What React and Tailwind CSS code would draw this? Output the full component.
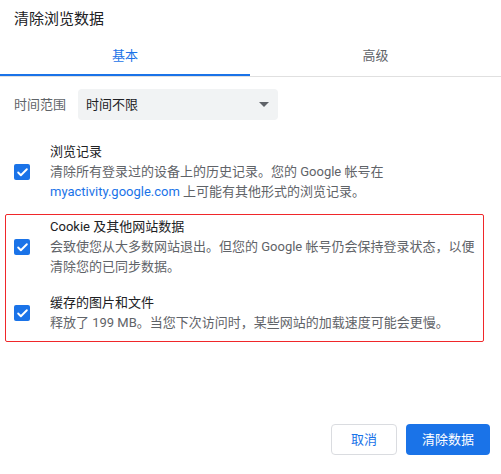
import { Check } from 'lucide-react';

const font = { fontFamily: 'Roboto, "Noto Sans CJK SC", sans-serif' };

const Checkbox = () => (
  <div className="w-4 h-4 shrink-0 rounded-[2px] bg-[#1a73e8] flex items-center justify-center">
    <Check className="w-[13px] h-[13px] text-white" strokeWidth={3.5} />
  </div>
);

const Item = ({ title, children }) => (
  <div className="flex items-center">
    <Checkbox />
    <div className="ml-5 w-[436px] text-[13px] leading-5">
      <div className="text-[#202124]">{title}</div>
      <div className="text-[#5f6368]">{children}</div>
    </div>
  </div>
);

export default function App() {
  return (
    <div className="w-[501px] h-[474px] bg-white" style={font}>
      {/* Header */}
      <div className="pt-[9px] px-[14px] text-[15px] leading-5 text-[#202124]">清除浏览数据</div>

      {/* Tabs */}
      <div className="mt-[7px] flex border-b border-[#e0e0e0]">
        <div className="relative w-[250px] h-10 flex items-center justify-center text-[13px] text-[#1a73e8]">
          基本
          <div className="absolute left-0 right-0 bottom-0 h-[2px] bg-[#1a73e8]" />
        </div>
        <div className="flex-1 h-10 flex items-center justify-center text-[13px] text-[#5f6368]">高级</div>
      </div>

      {/* Time range */}
      <div className="mt-3 px-[14px] flex items-center">
        <span className="text-[13px] text-[#5f6368] w-16">时间范围</span>
        <div className="w-[200px] h-[31px] rounded-[4px] bg-[#f1f3f4] flex items-center justify-between pl-2 pr-[9px]">
          <span className="text-[13px] text-[#202124]">时间不限</span>
          <svg width="10" height="5" viewBox="0 0 10 5">
            <path d="M0 0 L10 0 L5 5 Z" fill="#5f6368" />
          </svg>
        </div>
      </div>

      {/* Items */}
      <div className="mt-[22px] px-[14px]">
        <Item title="浏览记录">
          清除所有登录过的设备上的历史记录。您的 Google 帐号在
          <br />
          <span className="text-[#1a73e8]">myactivity.google.com</span> 上可能有其他形式的浏览记录。
        </Item>
      </div>

      <div className="mt-3 ml-[5px] w-[479px] rounded-[2px] border border-[#f0272a] pl-2 pt-[2px] pb-2">
        <Item title="Cookie 及其他网站数据">
          会致使您从大多数网站退出。但您的 Google 帐号仍会保持登录状态，以便
          <br />
          清除您的已同步数据。
        </Item>
        <div className="mt-4">
          <Item title="缓存的图片和文件">释放了 199 MB。当您下次访问时，某些网站的加载速度可能会更慢。</Item>
        </div>
      </div>

      {/* Actions */}
      <div className="mt-[82px] pr-[11px] flex justify-end gap-[9px]">
        <button className="w-[66px] h-[31px] rounded-[4px] border border-[#dadce0] bg-white text-[13px] text-[#1a73e8]">
          取消
        </button>
        <button className="w-[84px] h-[31px] rounded-[4px] bg-[#1a73e8] text-[13px] text-white">清除数据</button>
      </div>
    </div>
  );
}
